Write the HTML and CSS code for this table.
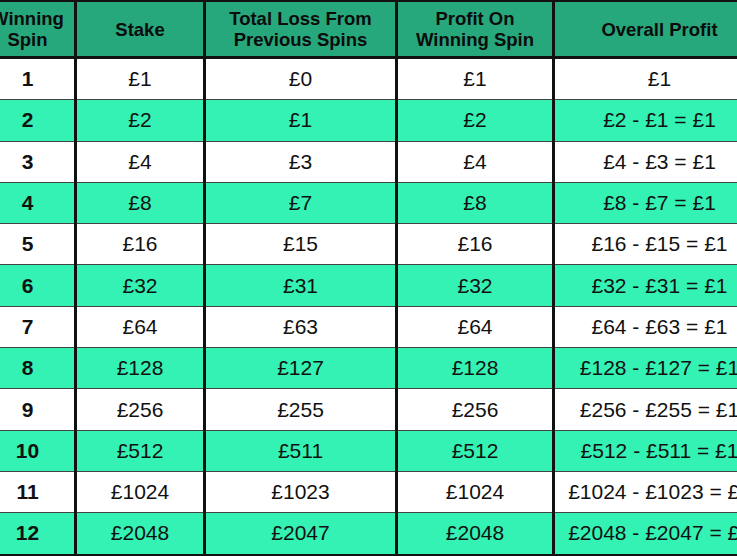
FILE: index.html
```html
<!DOCTYPE html>
<html>
<head>
<meta charset="utf-8">
<link rel="stylesheet" href="styles.css">
</head>
<body>
<div class="frame">
<table class="spins">
<colgroup>
<col class="c1"><col class="c2"><col class="c3"><col class="c4"><col class="c5">
</colgroup>
<thead>
<tr><th>Winning<br>Spin</th><th>Stake</th><th>Total Loss From<br>Previous Spins</th><th>Profit On<br>Winning Spin</th><th>Overall Profit</th></tr>
</thead>
<tbody>
<tr><td class="n">1</td><td>£1</td><td>£0</td><td>£1</td><td>£1</td></tr>
<tr class="alt"><td class="n">2</td><td>£2</td><td>£1</td><td>£2</td><td>£2 - £1 = £1</td></tr>
<tr><td class="n">3</td><td>£4</td><td>£3</td><td>£4</td><td>£4 - £3 = £1</td></tr>
<tr class="alt"><td class="n">4</td><td>£8</td><td>£7</td><td>£8</td><td>£8 - £7 = £1</td></tr>
<tr><td class="n">5</td><td>£16</td><td>£15</td><td>£16</td><td>£16 - £15 = £1</td></tr>
<tr class="alt"><td class="n">6</td><td>£32</td><td>£31</td><td>£32</td><td>£32 - £31 = £1</td></tr>
<tr><td class="n">7</td><td>£64</td><td>£63</td><td>£64</td><td>£64 - £63 = £1</td></tr>
<tr class="alt"><td class="n">8</td><td>£128</td><td>£127</td><td>£128</td><td>£128 - £127 = £1</td></tr>
<tr><td class="n">9</td><td>£256</td><td>£255</td><td>£256</td><td>£256 - £255 = £1</td></tr>
<tr class="alt"><td class="n">10</td><td>£512</td><td>£511</td><td>£512</td><td>£512 - £511 = £1</td></tr>
<tr><td class="n">11</td><td>£1024</td><td>£1023</td><td>£1024</td><td>£1024 - £1023 = £1</td></tr>
<tr class="alt"><td class="n">12</td><td>£2048</td><td>£2047</td><td>£2048</td><td>£2048 - £2047 = £1</td></tr>
</tbody>
</table>
</div>
</body>
</html>
```
FILE: styles.css
```css
html, body {
  margin: 0;
  padding: 0;
  background: #ffffff;
  overflow: hidden;
}
body {
  width: 737px;
  height: 556px;
  font-family: "Liberation Sans", Arial, sans-serif;
  color: #111;
}
.frame {
  margin-left: -22px;
  margin-top: -1px;
}
.spins {
  border-collapse: collapse;
  table-layout: fixed;
  width: 786px;
}
.c1 { width: 96px; }
.c2 { width: 129px; }
.c3 { width: 192px; }
.c4 { width: 157px; }
.c5 { width: 212px; }
.spins th {
  background: #27a77c;
  font-weight: bold;
  font-size: 18.5px;
  line-height: 21px;
  height: 54px;
  padding: 0;
  text-align: center;
  vertical-align: middle;
  border: 3px solid #111;
  color: #0c0c0c;
}
.spins td {
  font-size: 21px;
  height: 40.3px;
  padding: 0;
  text-align: center;
  vertical-align: middle;
  border-left: 3px solid #111;
  border-right: 3px solid #111;
  border-top: 1px solid #444;
  border-bottom: 1px solid #444;
  background: #ffffff;
  white-space: nowrap;
  overflow: hidden;
}
.spins tr.alt td {
  background: #33f2b4;
}
.spins td.n {
  font-weight: bold;
}
.spins tbody tr:last-child td {
  border-bottom: 3px solid #111;
}
```
